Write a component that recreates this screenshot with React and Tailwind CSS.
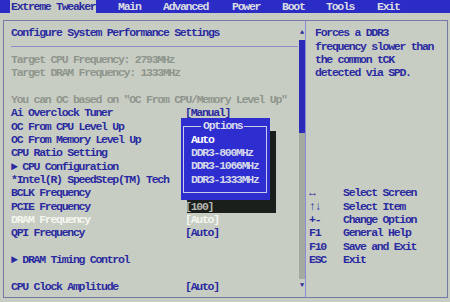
const tabs = [
    { label: 'Extreme Tweaker', box: 'w-[86px] pl-[1px] bg-[#c8cdc4] text-[#2a2aa0]' },
    { label: 'Main', box: 'w-[67px] pl-[22px]' },
    { label: 'Advanced', box: 'w-[69px]' },
    { label: 'Power', box: 'w-[50px]' },
    { label: 'Boot', box: 'w-[44px]' },
    { label: 'Tools', box: 'w-[51px]' },
    { label: 'Exit', box: 'w-[40px]' },
]

// left list, one entry per text row
const rows = [
    { t: 'Configure System Performance Settings' },
    { line: true },
    { t: 'Target CPU Frequency: 2793MHz', dim: true },
    { t: 'Target DRAM Frequency: 1333MHz', dim: true },
    {},
    { t: 'You can OC based on "OC From CPU/Memory Level Up"', dim: true },
    { t: 'Ai Overclock Tuner', v: '[Manual]' },
    { t: 'OC From CPU Level Up' },
    { t: 'OC From Memory Level Up' },
    { t: 'CPU Ratio Setting' },
    { t: '► CPU Configuration' },
    { t: '*Intel(R) SpeedStep(TM) Tech' },
    { t: 'BCLK Frequency' },
    { t: 'PCIE Frequency', v: '[100]', shade: true },
    { t: 'DRAM Frequency', v: '[Auto]', sel: true },
    { t: 'QPI Frequency', v: '[Auto]' },
    {},
    { t: '► DRAM Timing Control' },
    {},
    { t: 'CPU Clock Amplitude', v: '[Auto]' },
]

const keys = [
    ['↔', 'Select Screen'],
    ['↑↓', 'Select Item'],
    ['+-', 'Change Option'],
    ['F1', 'General Help'],
    ['F10', 'Save and Exit'],
    ['ESC', 'Exit'],
]

const help = ['Forces a DDR3', 'frequency slower than', 'the common tCK', 'detected via SPD.']

const options = ['Auto', 'DDR3-800MHz', 'DDR3-1066MHz', 'DDR3-1333MHz']

function Row({ r }) {
    if (r.line) {
        return (
            <div className="flex h-[13.33px] items-center">
                <div className="h-px w-[287px] bg-[#8a8ccc]" />
            </div>
        )
    }
    const color = r.sel ? 'text-[#f4f6f0]' : r.dim ? 'text-[#8e958c]' : 'text-[#2a2aa0]'
    return (
        <div className={`flex h-[13.33px] whitespace-pre ${color}`}>
            <span className="w-[174px] shrink-0">{r.t || ''}</span>
            {r.v && <span className={r.shade ? 'relative z-10 text-[#b4b9b0]' : ''}>{r.v}</span>}
        </div>
    )
}

export default function App() {
    return (
        <div
            className="relative h-[302px] w-[450px] overflow-hidden bg-[#c8cdc4] text-[11.5px] font-bold leading-[13.33px] tracking-[-1.275px]"
            style={{ fontFamily: '"Liberation Mono", "DejaVu Sans Mono", monospace' }}
        >
            {/* menu bar */}
            <div className="flex h-[13px] bg-[#2b2bc6] pl-[10px] leading-[13px] text-[#dadee2]">
                {tabs.map((tab) => (
                    <span key={tab.label} className={`shrink-0 whitespace-pre ${tab.box}`}>
                        {tab.label}
                    </span>
                ))}
            </div>

            {/* framed body */}
            <div className="ml-[3px] mt-[7px] flex h-[278px] w-[445px] border border-[#747ba4]">
                {/* settings list */}
                <div className="w-[294px] shrink-0 pl-[7px] pt-[5.33px]">
                    {rows.map((r, i) => (
                        <Row key={i} r={r} />
                    ))}
                </div>

                {/* scroll bar */}
                <div className="flex w-[7px] shrink-0 flex-col items-center pt-[5.33px] text-[#2a2aa0]">
                    <div className="flex h-[13.33px] items-center text-[7px] leading-none">▲</div>
                    <div className="h-[93px] w-[6px] bg-[#2b2bb8]" />
                    <div className="h-[146.67px] w-[6px] bg-[#a3aa9f]" />
                    <div className="flex h-[13.33px] items-center text-[7px] leading-none">▼</div>
                </div>

                {/* help panel */}
                <div className="flex-1 border-l border-[#8a8cd8] pt-[5.33px] text-[#2a2aa0]">
                    <div className="pl-[9px]">
                        {help.map((h) => (
                            <div key={h} className="h-[13.33px] whitespace-pre">
                                {h}
                            </div>
                        ))}
                    </div>
                    <div className="mt-[106.67px] pl-[3px]">
                        {keys.map(([k, d]) => (
                            <div key={d} className="flex h-[13.33px] whitespace-pre">
                                <span className="w-[34px] shrink-0">{k}</span>
                                <span>{d}</span>
                            </div>
                        ))}
                    </div>
                </div>
            </div>

            {/* options popup */}
            <div className="absolute left-[181px] top-[118px] h-[82px] w-[89px] bg-[#2d2dd0] shadow-[6px_13px_0_0_#1b1f1b]">
                <div className="absolute bottom-[7px] left-[2px] right-[3px] top-[8px] border border-[#c8cce8]" />
                <div className="absolute left-[20px] top-[1.33px] bg-[#2d2dd0] px-[2px] text-[#d8dcec]">Options</div>
                <div className="absolute left-[10px] top-[14.67px]">
                    {options.map((o, i) => (
                        <div key={o} className={`h-[13.33px] ${i === 0 ? 'text-white' : 'text-[#d4d8ea]'}`}>
                            {o}
                        </div>
                    ))}
                </div>
            </div>
        </div>
    )
}
